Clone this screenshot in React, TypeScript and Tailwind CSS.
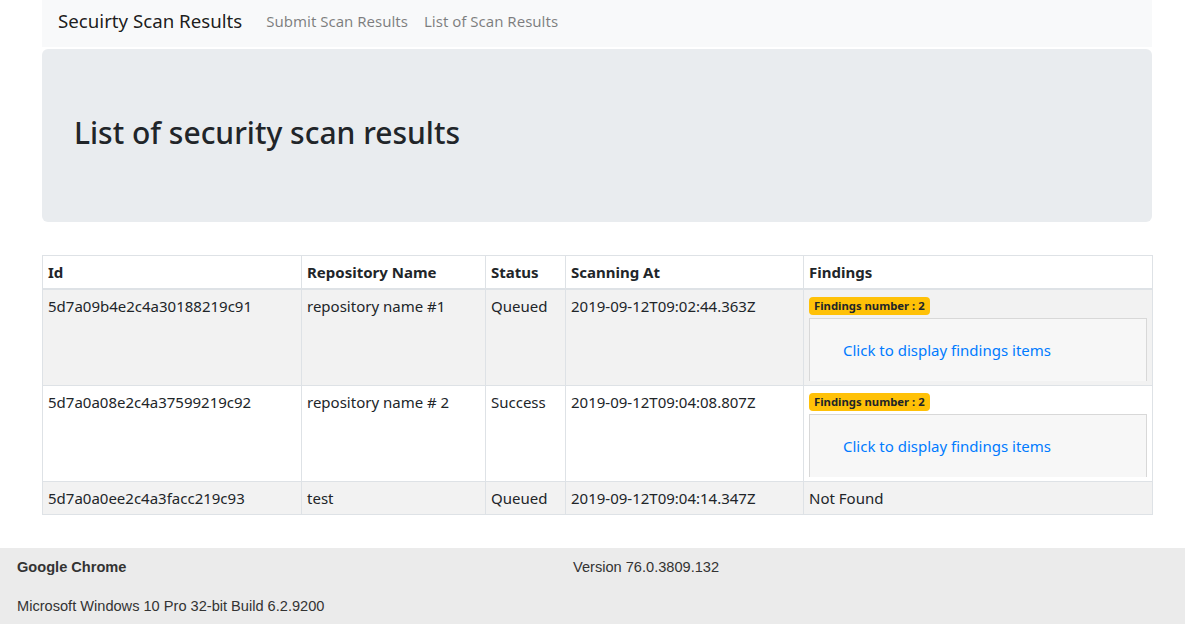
import React from "react";

const rows = [
  {
    id: "5d7a09b4e2c4a30188219c91",
    name: "repository name #1",
    status: "Queued",
    at: "2019-09-12T09:02:44.363Z",
    findings: 2,
  },
  {
    id: "5d7a0a08e2c4a37599219c92",
    name: "repository name # 2",
    status: "Success",
    at: "2019-09-12T09:04:08.807Z",
    findings: 2,
  },
  {
    id: "5d7a0a0ee2c4a3facc219c93",
    name: "test",
    status: "Queued",
    at: "2019-09-12T09:04:14.347Z",
    findings: 0,
  },
];

const font = { fontFamily: '"Noto Sans", "Open Sans", sans-serif' };

export default function App() {
  return (
    <div className="min-h-screen bg-white text-[#212529]" style={font}>
      <div className="ml-[42px] w-[1110px]">
        {/* Navbar */}
        <nav className="h-[47px] bg-[#f8f9fa] flex items-center px-4 pb-[5px]">
          <span className="text-[18.7px] text-[rgba(0,0,0,0.9)] mr-6">Secuirty Scan Results</span>
          <a className="text-[15px] text-[rgba(0,0,0,0.5)] mr-4">Submit Scan Results</a>
          <a className="text-[15px] text-[rgba(0,0,0,0.5)]">List of Scan Results</a>
        </nav>

        {/* Jumbotron */}
        <div className="mt-[2px] h-[173px] bg-[#e9ecef] rounded-md flex items-center px-8 pb-[6px]">
          <h1 className="text-[30px] font-medium leading-tight">List of security scan results</h1>
        </div>

        {/* Table */}
        <table className="mt-[33px] w-[1110px] table-fixed border-collapse text-[15px]">
          <colgroup>
            <col className="w-[259px]" />
            <col className="w-[184px]" />
            <col className="w-[80px]" />
            <col className="w-[238px]" />
            <col className="w-[349px]" />
          </colgroup>
          <thead>
            <tr>
              {["Id", "Repository Name", "Status", "Scanning At", "Findings"].map((h) => (
                <th
                  key={h}
                  className="border border-[#dee2e6] border-b-2 px-[5px] py-[4px] text-left font-bold leading-6"
                >
                  {h}
                </th>
              ))}
            </tr>
          </thead>
          <tbody>
            {rows.map((r, i) => (
              <tr key={r.id} className={i % 2 === 0 ? "bg-[#f2f2f2]" : "bg-white"}>
                <td className="border border-[#dee2e6] px-[5px] py-[4px] align-top leading-6">{r.id}</td>
                <td className="border border-[#dee2e6] px-[5px] py-[4px] align-top leading-6">{r.name}</td>
                <td className="border border-[#dee2e6] px-[5px] py-[4px] align-top leading-6">{r.status}</td>
                <td className="border border-[#dee2e6] px-[5px] py-[4px] align-top leading-6">{r.at}</td>
                <td className="border border-[#dee2e6] px-[5px] py-[4px] align-top leading-6">
                  {r.findings > 0 ? (
                    <div className="flex flex-col">
                      <div className="h-[24px] pt-[3px] flex items-start">
                        <span className="h-[18px] flex items-center bg-[#ffc107] text-[#212529] text-[11.3px] font-bold rounded-[4px] px-[5px] leading-none">
                          Findings number : {r.findings}
                        </span>
                      </div>
                      <div className="h-[63px] border border-[rgba(0,0,0,0.125)] border-b-0 bg-[#f7f7f7] flex items-center pl-[33px]">
                        <a className="text-[#007bff] text-[15px] cursor-pointer">Click to display findings items</a>
                      </div>
                    </div>
                  ) : (
                    "Not Found"
                  )}
                </td>
              </tr>
            ))}
          </tbody>
        </table>
      </div>

      {/* Browser info footer */}
      <footer
        className="mt-[33px] bg-[#ebebeb] h-[76px] text-[#333] text-[14.6px] px-[17px] pt-[9px]"
        style={{ fontFamily: '"Liberation Sans", Arial, sans-serif' }}
      >
        <div className="flex">
          <span className="w-[556px] font-bold">Google Chrome</span>
          <span>Version 76.0.3809.132</span>
        </div>
        <div className="mt-[17px]">Microsoft Windows 10 Pro 32-bit Build 6.2.9200</div>
      </footer>
    </div>
  );
}
